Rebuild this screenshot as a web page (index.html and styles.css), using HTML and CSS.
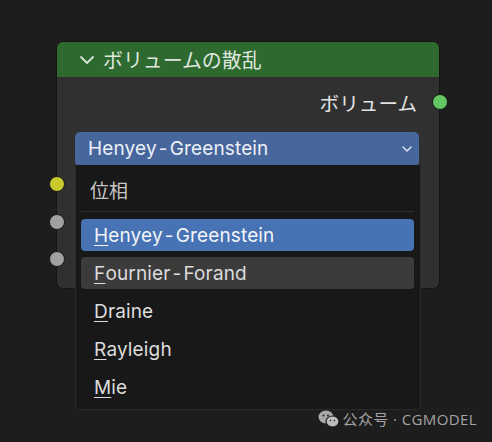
FILE: index.html
```html
<html>
    <head>
        <link rel="stylesheet" href="styles.css">
    </head>
    <body>
        <div class="canvas">
            <div class="node">
                <div class="node-header">
                    <svg class="collapse" width="16" height="10" viewBox="0 0 16 10">
                        <path d="M2 2 L8 8 L14 2" fill="none" stroke="#d8e4d8" stroke-width="1.8" stroke-linecap="round" stroke-linejoin="round"/>
                    </svg>
                    <span class="node-title">ボリュームの散乱</span>
                </div>
                <div class="node-body">
                    <div class="output-row">
                        <span>ボリューム</span>
                        <span class="socket socket-out green"></span>
                    </div>
                    <div class="dropdown">
                        <span>Henyey<span class="dash">-</span>Greenstein</span>
                        <svg width="12" height="8" viewBox="0 0 12 8">
                            <path d="M2 2 L6 6 L10 2" fill="none" stroke="#d6dff0" stroke-width="1.6" stroke-linecap="round" stroke-linejoin="round"/>
                        </svg>
                    </div>
                    <div class="input-row"><span class="socket socket-in yellow"></span></div>
                    <div class="input-row"><span class="socket socket-in grey"></span></div>
                    <div class="input-row"><span class="socket socket-in grey"></span></div>
                </div>

                <div class="popup">
                    <div class="popup-title">位相</div>
                    <div class="popup-sep"></div>
                    <div class="item active"><span><u>H</u>enyey<span class="dash">-</span>Greenstein</span></div>
                    <div class="item hover"><span><u>F</u>ournier<span class="dash">-</span>Forand</span></div>
                    <div class="item"><span><u>D</u>raine</span></div>
                    <div class="item"><span><u>R</u>ayleigh</span></div>
                    <div class="item"><span><u>M</u>ie</span></div>
                </div>
            </div>

            <div class="watermark">
                <svg width="22" height="18" viewBox="0 0 22 18">
                    <ellipse cx="8" cy="7" rx="7.5" ry="6.5" fill="#a8a8a8"/>
                    <ellipse cx="14.5" cy="11.5" rx="6.5" ry="5.5" fill="#bdbdbd" stroke="#1e1e1e" stroke-width="1.2"/>
                    <circle cx="5.5" cy="5.5" r="1" fill="#1e1e1e"/>
                    <circle cx="10" cy="5.5" r="1" fill="#1e1e1e"/>
                    <circle cx="12.5" cy="10.5" r="0.8" fill="#1e1e1e"/>
                    <circle cx="16.5" cy="10.5" r="0.8" fill="#1e1e1e"/>
                </svg>
                <span>公众号 · CGMODEL</span>
            </div>
        </div>
    </body>
</html>
```

FILE: styles.css
```css
body {
    margin: 0;
    background-color: #1d1d1d;
}
.canvas {
    position: relative;
    width: 492px;
    height: 442px;
    box-sizing: border-box;
    padding: 42px 0 0 57px;
    background-color: #1d1d1d;
    overflow: hidden;
    font-family: Inter, "Noto Sans CJK JP", sans-serif;
    color: #e2e2e2;
}
.node {
    position: relative;
    width: 382px;
    height: 246px;
    background-color: #303030;
    border-radius: 6px;
    box-shadow: 0 0 0 1px #151515;
}
.node-header {
    height: 35px;
    display: flex;
    align-items: center;
    padding-left: 22px;
    gap: 8px;
    background-color: #2e6a2f;
    border-radius: 6px 6px 0 0;
}
.node-title {
    font-size: 19.9px;
    color: #dfe7df;
}
.node-body {
    padding: 0 20px 0 18px;
}
.output-row {
    position: relative;
    height: 50px;
    display: flex;
    align-items: center;
    justify-content: flex-end;
    padding-right: 2px;
    font-size: 19.6px;
}
.socket {
    position: absolute;
    width: 14px;
    height: 14px;
    border-radius: 50%;
    border: 1px solid #1a1a1a;
    top: 50%;
    transform: translateY(-50%);
}
.socket-out {
    right: -29px;
}
.socket-in {
    left: -26px;
}
.green { background-color: #63c763; }
.yellow { background-color: #c8c92a; }
.grey { background-color: #a1a1a1; }
.dash {
    margin: 0 2px;
}
.dropdown {
    margin-top: 5px;
    height: 33px;
    display: flex;
    align-items: center;
    justify-content: space-between;
    padding: 0 6px 0 13px;
    background-color: #47669c;
    border-radius: 5px 5px 3px 3px;
    font-size: 19px;
    letter-spacing: 0.15px;
    color: #ecf0f6;
}
.input-row {
    position: relative;
    height: 37.7px;
}
.input-row:first-of-type {
    margin-top: 6px;
}
.popup {
    position: absolute;
    left: 18px;
    top: 123px;
    width: 346px;
    box-sizing: border-box;
    padding: 5px 6px 3px 5px;
    background-color: #181818;
    border: 1px solid #2a2a2a;
    border-top: none;
    border-radius: 0 0 5px 5px;
}
.popup-title {
    height: 38px;
    display: flex;
    align-items: center;
    padding-left: 9px;
    font-size: 19px;
    color: #c6c6c6;
}
.popup-sep {
    height: 1px;
    margin: 3px 0 4px;
    background-color: #303030;
}
.item {
    height: 38px;
    padding: 3px 0;
    box-sizing: border-box;
}
.item > span {
    display: flex;
    align-items: center;
    height: 100%;
    padding-left: 13px;
    border-radius: 4px;
    font-size: 19px;
    letter-spacing: 0.15px;
    color: #dcdcdc;
}
.item u {
    text-decoration-thickness: 1px;
    text-underline-offset: 3px;
}
.item.active > span {
    background-color: #4772b3;
    color: #f2f4f8;
}
.item.hover > span {
    background-color: #3b3b3b;
}
.watermark {
    position: absolute;
    right: 15px;
    bottom: 13px;
    display: flex;
    align-items: center;
    gap: 3px;
    font-size: 15px;
    letter-spacing: 0.4px;
    color: #a3a3a3;
    font-family: "Open Sans", "Noto Sans CJK SC", sans-serif;
}
```
